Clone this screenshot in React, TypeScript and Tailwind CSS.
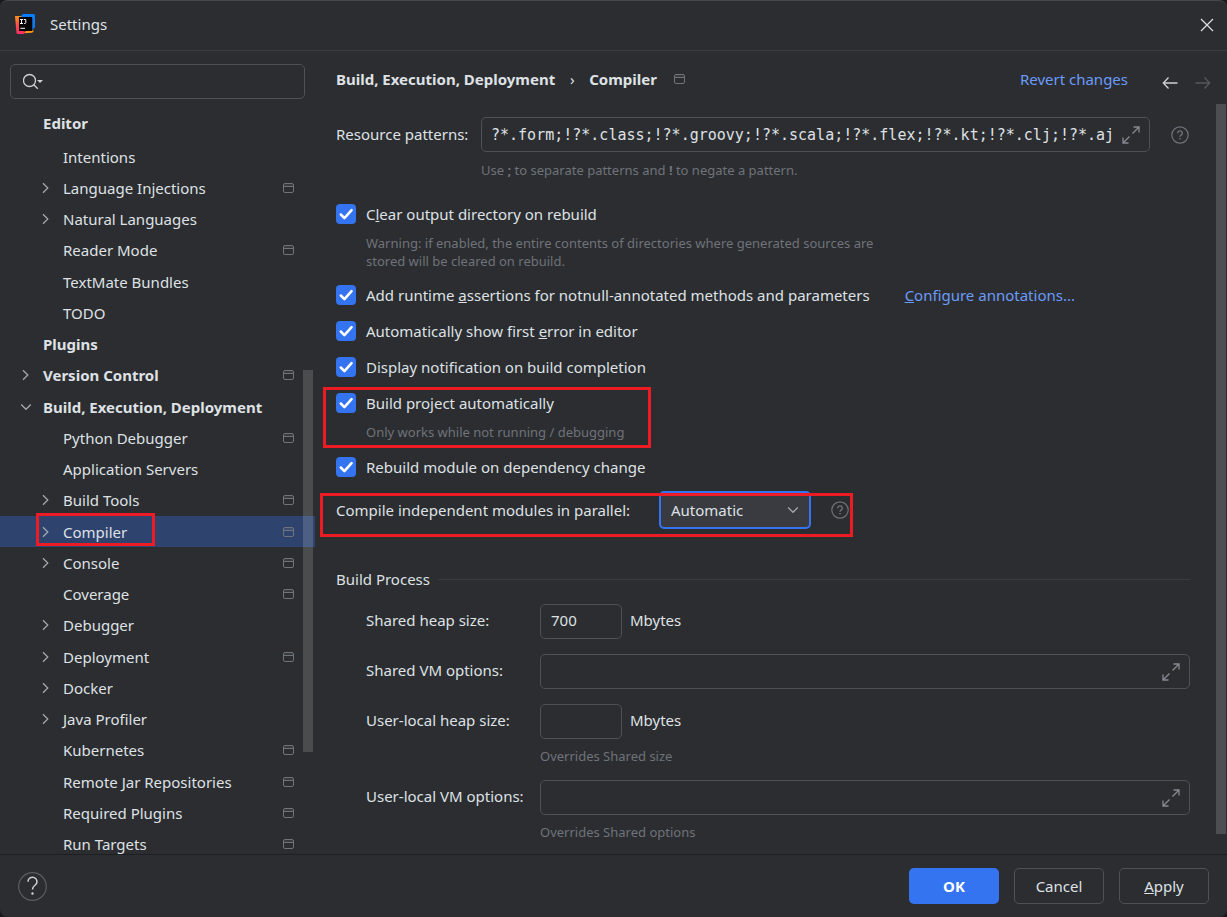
import React, { useState } from 'react';

type TreeItem = {
    label: string;
    level: 0 | 1;
    state?: 'open' | 'closed';
    project?: boolean;
    selected?: boolean;
};

const items: TreeItem[] = [
    { label: 'Intentions', level: 1 },
    { label: 'Language Injections', level: 1, state: 'closed', project: true },
    { label: 'Natural Languages', level: 1, state: 'closed' },
    { label: 'Reader Mode', level: 1, project: true },
    { label: 'TextMate Bundles', level: 1 },
    { label: 'TODO', level: 1 },
    { label: 'Plugins', level: 0 },
    { label: 'Version Control', level: 0, state: 'closed', project: true },
    { label: 'Build, Execution, Deployment', level: 0, state: 'open' },
    { label: 'Python Debugger', level: 1, project: true },
    { label: 'Application Servers', level: 1 },
    { label: 'Build Tools', level: 1, state: 'closed', project: true },
    { label: 'Compiler', level: 1, state: 'closed', project: true, selected: true },
    { label: 'Console', level: 1, state: 'closed', project: true },
    { label: 'Coverage', level: 1, project: true },
    { label: 'Debugger', level: 1, state: 'closed' },
    { label: 'Deployment', level: 1, state: 'closed', project: true },
    { label: 'Docker', level: 1, state: 'closed' },
    { label: 'Java Profiler', level: 1, state: 'closed' },
    { label: 'Kubernetes', level: 1, project: true },
    { label: 'Remote Jar Repositories', level: 1, project: true },
    { label: 'Required Plugins', level: 1, project: true },
    { label: 'Run Targets', level: 1, project: true },
];

const Logo = () => (
    <svg width="20" height="20" viewBox="0 0 20 20" aria-hidden="true">
        <defs>
            <linearGradient id="warm" x1="0" y1="0" x2="0.3" y2="1">
                <stop offset="0.1" stopColor="#ff8a1f" />
                <stop offset="0.55" stopColor="#ff4a4f" />
                <stop offset="1" stopColor="#ff2d68" />
            </linearGradient>
        </defs>
        <path d="M0 2h8v15l3 1-2.5 2H3a1.5 1.5 0 0 1-1.5-1.3Z" fill="url(#warm)" />
        <path d="M11 16.500h7.500v1.200l-1.500 1.100L9.500 19.200Z" fill="#ff9419" />
        <path d="M6.500 1.200 8 0h10.500A1.500 1.500 0 0 1 20 1.500V13l-2.500 3V4H6Z" fill="#087cfa" />
        <path d="M4 3h13v14H4Z" fill="#000" />
        <path d="M5 5.500h3M5 9.500h3M6.500 5.500v4M8.800 5.500h2v3q0 1-1 1h-.8M5.300 14.300h4.700" fill="none" stroke="#fff" strokeWidth="1" />
    </svg>
);

const ProjectIcon = () => (
    <svg width="12" height="12" viewBox="0 0 12 12" fill="none" stroke="#6f737a" aria-hidden="true" className="shrink-0">
        <rect x="0.5" y="1.5" width="10" height="9" rx="1.5" />
        <path d="M1 4.500h9.500" />
        <path d="M1 3h9.500" strokeOpacity="0.4" />
    </svg>
);

const Chevron = ({ open = false }: { open?: boolean }) => (
    <svg width="12" height="12" viewBox="0 0 12 12" fill="none" stroke="#a4a7ad" strokeWidth="1.3" aria-hidden="true">
        {open ? <path d="M1.2 3.5 6 8.3l4.8-4.8" /> : <path d="m3 1.2 4.8 4.8L3 10.8" />}
    </svg>
);

const HelpIcon = () => (
    <svg width="18" height="18" viewBox="0 0 18 18" fill="none" stroke="#6f737a" strokeWidth="1.2" aria-hidden="true">
        <circle cx="9" cy="9" r="8.2" />
        <path d="M6.7 7.2a2.3 2.2 0 1 1 3.6 1.7C9.4 9.5 9 9.8 9 10.7" strokeWidth="1.4" />
        <path d="M9 11.900v1.400" strokeWidth="1.5" />
    </svg>
);

const ExpandIcon = () => (
    <svg width="18" height="18" viewBox="0 0 18 18" fill="none" stroke="#868a91" strokeWidth="1.3" aria-hidden="true">
        <path d="M10.500 7.500 17 1M11.500 1H17v5.500M7.500 10.500 1 17M1 11.500V17h5.500" />
    </svg>
);

// Red outline laid over a setting to draw attention to it
const Highlight = ({ className }: { className: string }) => (
    <span aria-hidden="true" className={`pointer-events-none absolute z-10 border-3 border-[#ed1c24] ${className}`} />
);

const TreeRow = ({ item }: { item: TreeItem }) => (
    <li className={`flex h-[31px] items-center pr-5 nth-[4n]:h-8 ${item.selected ? 'bg-[#2e436e]' : ''}`}>
        <button type="button" className={`relative flex flex-1 items-center text-left ${item.level === 0 ? 'pl-5' : 'pl-10'}`}>
            <span className="w-[23px]">{item.state && <Chevron open={item.state === 'open'} />}</span>
            <span className={item.level === 0 ? 'font-bold' : ''}>{item.label}</span>
            {item.selected && <Highlight className="-top-[9px] left-9 h-[33px] w-[119px]" />}
        </button>
        {item.project && <ProjectIcon />}
    </li>
);

type CheckProps = { id: string; children: React.ReactNode };

const Check = ({ id, children }: CheckProps) => (
    <div className="flex h-5 items-center gap-[10px]">
        <span className="relative size-5 shrink-0">
            <input id={id} type="checkbox" defaultChecked className="peer block size-5 appearance-none rounded bg-[#43454a] checked:bg-[#3574f0]" />
            <svg viewBox="0 0 20 20" fill="none" stroke="#fff" strokeWidth="2.5" className="pointer-events-none absolute inset-0 hidden peer-checked:block">
                <path d="m4.800 10.500 3.600 3.600 7.200-8" strokeLinecap="round" strokeLinejoin="round" />
            </svg>
        </span>
        <label htmlFor={id}>{children}</label>
    </div>
);

const box = 'h-[35px] rounded-[5px] border border-[#4e5157] bg-transparent';

const ExpandField = ({ id }: { id: string }) => (
    <div className={`${box} flex items-center pr-[9px]`}>
        <input id={id} type="text" className="h-full min-w-0 flex-1 px-[10px] outline-none" />
        <button type="button" aria-label="Expand">
            <ExpandIcon />
        </button>
    </div>
);

const Sidebar = () => (
    <aside className="relative flex w-[315px] shrink-0 flex-col overflow-hidden">
        <div className={`${box} mx-[10px] mt-[13px] flex shrink-0 items-center pl-3`}>
            <svg width="22" height="18" viewBox="0 0 22 18" fill="none" aria-hidden="true">
                <circle cx="6.500" cy="7.500" r="6" stroke="#ced0d6" strokeWidth="1.3" />
                <path d="m10.800 11.800 4 4" stroke="#ced0d6" strokeWidth="1.3" />
                <path d="M14 7h6L17 10Z" fill="#ced0d6" />
            </svg>
            <input type="search" aria-label="Search settings" className="h-full min-w-0 flex-1 px-1 outline-none" />
        </div>
        <div className="mt-[7px] mb-px flex h-[34px] shrink-0 items-center pl-[43px] font-bold">Editor</div>
        <ul className="min-h-0 flex-1 overflow-hidden">
            {items.map((item) => (
                <TreeRow key={item.label} item={item} />
            ))}
        </ul>
        <div className="absolute top-[319px] right-[2px] h-[382px] w-[10px] bg-white/15" />
    </aside>
);

const App: React.FC = () => {
    const [mode, setMode] = useState('Automatic');

    return (
        <div className="bg-[#191a1c]">
            <div className="flex h-screen min-h-[700px] flex-col overflow-hidden rounded-lg border-t border-[#46484c] bg-[#2b2d30] font-['Noto_Sans','Open_Sans',sans-serif] text-[15px] leading-5 text-[#dfe1e5]">
                <header className="flex h-[50px] shrink-0 items-center border-b border-[#393b40] pr-[13px] pb-[3px] pl-[15px]">
                    <Logo />
                    <h1 className="ml-[15px] flex-1">Settings</h1>
                    <button type="button" aria-label="Close" className="mt-0.5">
                        <svg width="14" height="14" viewBox="0 0 14 14" stroke="#dfe1e5" strokeWidth="1.2">
                            <path d="m1 1 12 12M13 1 1 13" />
                        </svg>
                    </button>
                </header>

                <div className="flex min-h-0 flex-1">
                    <Sidebar />

                    <main className="relative min-w-0 flex-1 overflow-hidden pr-[37px] pl-[21px]">
                        {/* Breadcrumbs */}
                        <div className="-mr-[25px] flex h-14 items-center">
                            <nav className="flex flex-1 items-center font-bold">
                                <span>Build, Execution, Deployment</span>
                                <span className="w-[34px] text-center font-normal">›</span>
                                <span className="mr-[17px]">Compiler</span>
                                <ProjectIcon />
                            </nav>
                            <a href="#revert" className="mr-[34px] text-[#6b9bfa]">
                                Revert changes
                            </a>
                            <button type="button" aria-label="Back" className="mt-2 mr-[17px]">
                                <svg width="16" height="14" viewBox="0 0 16 14" fill="none" stroke="#ced0d6" strokeWidth="1.3">
                                    <path d="M15.500 7H1.500M6.500 1.500 1.300 7l5.200 5.500" />
                                </svg>
                            </button>
                            <button type="button" aria-label="Forward" disabled className="mt-2 mr-1">
                                <svg width="16" height="14" viewBox="0 0 16 14" fill="none" stroke="#55585e" strokeWidth="1.3">
                                    <path d="M.5 7h14M9.500 1.500 14.700 7l-5.200 5.500" />
                                </svg>
                            </button>
                        </div>

                        <div className="mt-[10px] flex items-center">
                            <label htmlFor="patterns" className="w-[145px] pb-0.5 whitespace-nowrap">
                                Resource patterns:
                            </label>
                            <div className={`${box} flex min-w-0 flex-1 items-center pr-[9px]`}>
                                <input
                                    id="patterns"
                                    type="text"
                                    defaultValue="?*.form;!?*.class;!?*.groovy;!?*.scala;!?*.flex;!?*.kt;!?*.clj;!?*.aj"
                                    className="h-full min-w-0 flex-1 pl-[9px] font-['DejaVu_Sans_Mono',monospace] outline-none"
                                />
                                <button type="button" aria-label="Expand">
                                    <ExpandIcon />
                                </button>
                            </div>
                            <button type="button" aria-label="About resource patterns" className="mr-px ml-[21px]">
                                <HelpIcon />
                            </button>
                        </div>
                        <p className="mt-2 ml-[145px] text-[13px] text-[#6f737a]">
                            Use <b>;</b> to separate patterns and <b>!</b> to negate a pattern.
                        </p>

                        <div className="mt-6">
                            <Check id="clear">
                                C<u>l</u>ear output directory on rebuild
                            </Check>
                            <p className="mt-[10px] ml-[30px] max-w-[530px] text-[13px] leading-[18px] text-[#6f737a]">
                                Warning: if enabled, the entire contents of directories where generated sources are
                                <br />
                                stored will be cleared on rebuild.
                            </p>
                        </div>
                        <div className="mt-[15px] flex flex-col gap-4">
                            <div className="flex items-center gap-[35px]">
                                <Check id="assertions">
                                    Add runtime <u>a</u>ssertions for notnull-annotated methods and parameters
                                </Check>
                                <a href="#annotations" className="text-[#6b9bfa]">
                                    <u>C</u>onfigure annotations...
                                </a>
                            </div>
                            <Check id="first-error">
                                Automatically show first <u>e</u>rror in editor
                            </Check>
                            <Check id="notify">Display notification on build completion</Check>
                            <div className="relative">
                                <Check id="auto-build">Build project automatically</Check>
                                <p className="mt-[10px] ml-[30px] text-[13px] leading-[18px] text-[#6f737a]">Only works while not running / debugging</p>
                                <Highlight className="-top-[6px] -left-[13px] h-[61px] w-[328px]" />
                            </div>
                            <Check id="rebuild">Rebuild module on dependency change</Check>
                        </div>

                        <div className="relative mt-[14px] flex h-[38px] items-center">
                            <label htmlFor="parallel" className="w-[323px]">
                                Compile independent modules in parallel:
                            </label>
                            <div className="relative flex items-center">
                                <select
                                    id="parallel"
                                    value={mode}
                                    onChange={(e) => setMode(e.target.value)}
                                    className="h-[38px] w-[152px] appearance-none rounded-[5px] border-2 border-[#3574f0] bg-[#393b40] pl-[10px] outline-none"
                                >
                                    <option>Automatic</option>
                                    <option>Enabled</option>
                                    <option>Disabled</option>
                                </select>
                                <span className="pointer-events-none absolute right-3">
                                    <Chevron open />
                                </span>
                            </div>
                            <button type="button" aria-label="About parallel compilation" className="ml-5">
                                <HelpIcon />
                            </button>
                            <Highlight className="top-[2px] -left-4 h-11 w-[533px]" />
                        </div>

                        <div className="mt-10 flex items-center gap-2">
                            <h2>Build Process</h2>
                            <hr className="flex-1 border-[#393b40]" />
                        </div>

                        <div className="mt-[15px] ml-[30px] grid grid-cols-[174px_1fr] items-center gap-y-[15px]">
                            <label htmlFor="shared-heap" className="pb-[3px]">
                                Shared heap size:
                            </label>
                            <div className="flex items-center gap-2">
                                <input id="shared-heap" type="text" defaultValue="700" className={`${box} w-[82px] px-[10px] pb-[3px]`} />
                                <span className="pb-[3px]">Mbytes</span>
                            </div>

                            <label htmlFor="shared-vm" className="pb-[3px]">
                                Shared VM options:
                            </label>
                            <ExpandField id="shared-vm" />

                            <label htmlFor="user-heap" className="pb-[3px]">
                                User-local heap size:
                            </label>
                            <div className="flex items-center gap-2">
                                <input id="user-heap" type="text" className={`${box} w-[82px] px-[10px] pb-[3px]`} />
                                <span className="pb-[3px]">Mbytes</span>
                            </div>

                            <p className="col-start-2 -mt-2 -mb-px text-[13px] text-[#6f737a]">Overrides Shared size</p>

                            <label htmlFor="user-vm" className="pb-[3px] whitespace-nowrap">
                                User-local VM options:
                            </label>
                            <ExpandField id="user-vm" />

                            <p className="col-start-2 -mt-2 text-[13px] text-[#6f737a]">Overrides Shared options</p>
                        </div>

                        <div className="absolute top-[53px] right-[1px] bottom-5 w-[10px] bg-[#4d4e51]" />
                    </main>
                </div>

                <footer className="flex h-[63px] shrink-0 items-center gap-[15px] border-t border-[#1e1f22] pr-[18px] pl-[18px]">
                    <button type="button" aria-label="Help" className="mr-auto">
                        <svg width="29" height="29" viewBox="0 0 29 29" fill="none">
                            <circle cx="14.5" cy="14.5" r="13.8" stroke="#5a5d63" strokeWidth="1.2" />
                            <path d="M10 9.700a4.500 4.300 0 1 1 7.200 3.300c-1.700 1.300-2.700 2.200-2.700 4.400" stroke="#ced0d6" strokeWidth="1.5" />
                            <circle cx="14.5" cy="21.5" r="1.2" fill="#ced0d6" />
                        </svg>
                    </button>
                    <button type="button" className="h-9 w-[90px] rounded-[5px] bg-[#3574f0] font-bold text-white">
                        OK
                    </button>
                    <button type="button" className="h-9 w-[90px] rounded-[5px] border border-[#4e5157]">
                        Cancel
                    </button>
                    <button type="button" className="h-9 w-[90px] rounded-[5px] border border-[#4e5157]">
                        <u>A</u>pply
                    </button>
                </footer>
            </div>
        </div>
    );
};

export default App;
